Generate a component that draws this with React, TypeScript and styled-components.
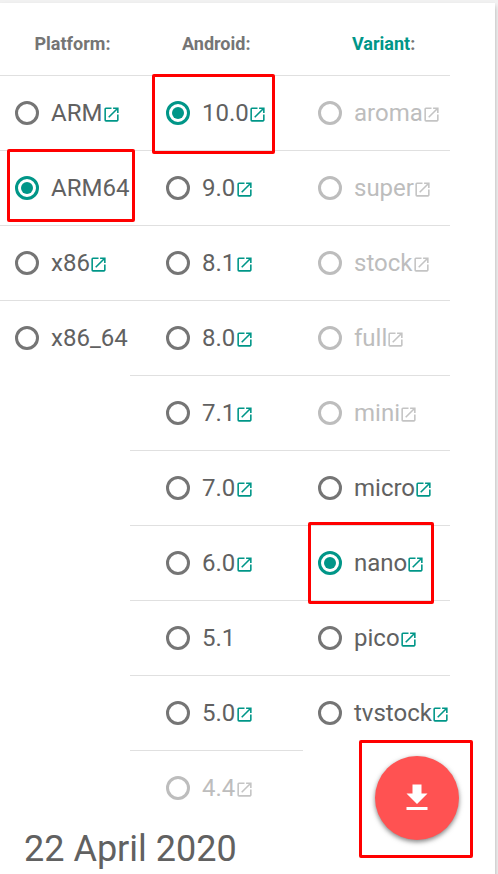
import React from 'react';
import styled, { createGlobalStyle, css } from 'styled-components';

const GlobalStyle = createGlobalStyle`
  * { box-sizing: border-box; }
  body { margin: 0; background: #f1f1f1; }
`;

const Page = styled.div`
  position: relative;
  width: 498px;
  height: 874px;
  overflow: hidden;
  padding-top: 3px;
  background: #f1f1f1;
  font-family: Roboto, sans-serif;
  color: #616161;
`;

const Card = styled.main`
  width: 495px;
  height: 890px;
  background: #fff;
  box-shadow: 0 3px 4px rgba(0, 0, 0, 0.2), 0 4px 6px rgba(0, 0, 0, 0.1);
`;

const Columns = styled.div`
  display: grid;
  grid-template-columns: 130px 173px 147px;
  align-items: start;
  height: 822px;
`;

const Column = styled.section<{ $inset: number }>`
  --inset: ${(p) => p.$inset}px;
`;

const Heading = styled.h2<{ $indent: number }>`
  display: flex;
  align-items: center;
  height: 72px;
  margin: 0;
  padding: 9px 0 0 ${(p) => p.$indent}px;
  font-size: 18px;
  font-weight: 700;
  line-height: 24px;
  color: #757575;
`;

const HeadingLink = styled.span`
  color: #009688;
`;

const Option = styled.label<{ $disabled?: boolean }>`
  position: relative;
  display: flex;
  align-items: center;
  height: 75px;
  padding-left: var(--inset);
  border-top: 1px solid #e0e0e0;
  white-space: nowrap;
  color: ${(p) => (p.$disabled ? '#bdbdbd' : '#616161')};
`;

const Radio = styled.span<{ $checked?: boolean; $disabled?: boolean }>`
  display: grid;
  place-items: center;
  flex: none;
  width: 24px;
  height: 24px;
  border: 3px solid ${(p) => (p.$checked ? '#009688' : p.$disabled ? '#bdbdbd' : '#757575')};
  border-radius: 50%;
  ${(p) =>
    p.$checked &&
    css`
      &::after {
        content: '';
        width: 12px;
        height: 12px;
        border-radius: 50%;
        background: #009688;
      }
    `}
`;

const Label = styled.span`
  margin-left: 12px;
  font-size: 24px;
  line-height: 36px;
`;

const LinkIcon = styled.svg<{ $disabled?: boolean }>`
  flex: none;
  width: 19px;
  height: 19px;
  margin: 3px 0 0 -0.8px;
  fill: ${(p) => (p.$disabled ? '#c4c4c4' : '#009688')};
`;

const ReleaseDate = styled.div`
  padding-left: 24px;
  font-size: 36px;
  line-height: 48px;
`;

const Marker = styled.div<{ $inset: string }>`
  position: absolute;
  inset: ${(p) => p.$inset};
  border: 3px solid #f00;
  border-radius: 2px;
  pointer-events: none;
  z-index: 1;
`;

const DownloadArea = styled.div`
  position: absolute;
  right: 25px;
  bottom: 16px;
  padding: 13px 11px 15px 13px;
  border: 3px solid #f00;
  border-radius: 2px;
`;

const DownloadButton = styled.button`
  display: grid;
  place-items: center;
  width: 84px;
  height: 84px;
  padding: 0;
  border: 0;
  border-radius: 50%;
  background: #ff5252;
  box-shadow: 0 2px 4px rgba(0, 0, 0, 0.4), 0 2px 7px rgba(0, 0, 0, 0.12);
  svg {
    width: 36px;
    height: 36px;
    fill: #fff;
  }
`;

type Item = {
  name: string;
  checked?: boolean;
  disabled?: boolean;
  link?: boolean;
  /** Inset of the highlight frame round the option, relative to its row. */
  marker?: string;
};
type Group = { title: string; linked?: boolean; inset: number; indent: number; items: Item[] };

const groups: Group[] = [
  {
    title: 'Platform',
    inset: 15,
    indent: 34.5,
    items: [
      { name: 'ARM' },
      { name: 'ARM64', checked: true, link: false, marker: '-2px -5px 3px 7px' },
      { name: 'x86' },
      { name: 'x86_64', link: false },
    ],
  },
  {
    title: 'Android',
    inset: 36,
    indent: 52,
    items: [
      { name: '10.0', checked: true, marker: '-2px 28px -4px 22px' },
      { name: '9.0' },
      { name: '8.1' },
      { name: '8.0' },
      { name: '7.1' },
      { name: '7.0' },
      { name: '6.0' },
      { name: '5.1', link: false },
      { name: '5.0' },
      { name: '4.4', disabled: true },
    ],
  },
  {
    title: 'Variant',
    linked: true,
    inset: 15,
    indent: 49,
    items: [
      { name: 'aroma', disabled: true },
      { name: 'super', disabled: true },
      { name: 'stock', disabled: true },
      { name: 'full', disabled: true },
      { name: 'mini', disabled: true },
      { name: 'micro' },
      { name: 'nano', checked: true, marker: '-4px 16px -4px 5px' },
      { name: 'pico' },
      { name: 'tvstock' },
    ],
  },
];

export default function App() {
  return (
    <>
      <GlobalStyle />
      <Page>
        <Card>
          <Columns>
            {groups.map((group) => (
              <Column key={group.title} $inset={group.inset}>
                <Heading $indent={group.indent}>
                  {group.linked ? <HeadingLink>{group.title}</HeadingLink> : group.title}:
                </Heading>
                {group.items.map(({ name, checked, disabled, link = true, marker }) => (
                  <Option key={name} $disabled={disabled}>
                    <Radio $checked={checked} $disabled={disabled} />
                    <Label>{name}</Label>
                    {link && (
                      <LinkIcon viewBox="0 0 24 24" $disabled={disabled}>
                        <path d="M19 19H5V5h7V3H5a2 2 0 0 0-2 2v14a2 2 0 0 0 2 2h14c1.1 0 2-.9 2-2v-7h-2v7zM14 3v2h3.59l-9.83 9.83 1.41 1.41L19 6.41V10h2V3h-7z" />
                      </LinkIcon>
                    )}
                    {marker && <Marker $inset={marker} />}
                  </Option>
                ))}
              </Column>
            ))}
          </Columns>
          <ReleaseDate>22 April 2020</ReleaseDate>
        </Card>
        <DownloadArea>
          <DownloadButton aria-label="Download">
            <svg viewBox="0 0 24 24">
              <path d="M19 9h-4V3H9v6H5l7 7 7-7zM5 18v2h14v-2H5z" />
            </svg>
          </DownloadButton>
        </DownloadArea>
      </Page>
    </>
  );
}
